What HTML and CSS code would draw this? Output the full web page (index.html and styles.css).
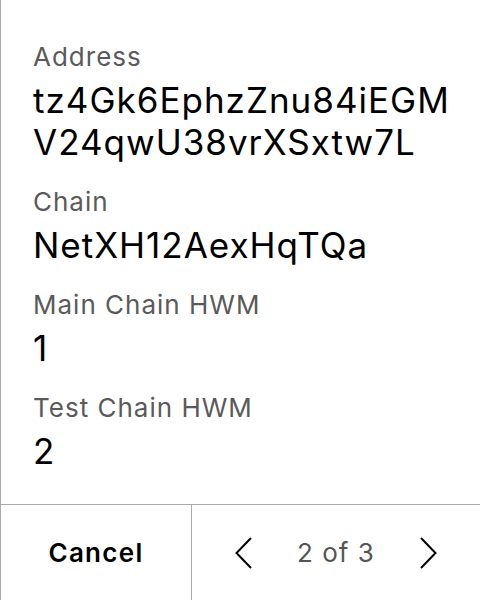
FILE: index.html
```html
<!DOCTYPE html>
<html>
<head>
<meta charset="utf-8">
<link rel="stylesheet" href="styles.css">
</head>
<body>
<div class="screen">
  <div class="content">
    <div class="field">
      <div class="label">Address</div>
      <div class="value">tz4Gk6EphzZnu84iEGMV24qwU38vrXSxtw7L</div>
    </div>
    <div class="field">
      <div class="label">Chain</div>
      <div class="value">NetXH12AexHqTQa</div>
    </div>
    <div class="field">
      <div class="label">Main Chain HWM</div>
      <div class="value">1</div>
    </div>
    <div class="field">
      <div class="label">Test Chain HWM</div>
      <div class="value">2</div>
    </div>
  </div>
  <div class="footer">
    <div class="cancel">Cancel</div>
    <div class="pager">
      <svg class="chev" width="18" height="34" viewBox="0 0 18 34"><path d="M16 2 L1.5 17 L16 32" fill="none" stroke="#000" stroke-width="2"/></svg>
      <span class="count">2 of 3</span>
      <svg class="chev" width="18" height="34" viewBox="0 0 18 34"><path d="M2 2 L16.5 17 L2 32" fill="none" stroke="#000" stroke-width="2"/></svg>
    </div>
  </div>
</div>
</body>
</html>
```
FILE: styles.css
```css
* { box-sizing: border-box; }
html, body { margin: 0; padding: 0; background: #fff; }
body { font-family: Inter, "Noto Sans", sans-serif; color: #000; }
.screen {
  width: 480px;
  height: 600px;
  border-left: 1px solid #aaa;
  display: flex;
  flex-direction: column;
}
.content {
  flex: 1;
  padding: 39px 30px 0 32px;
  display: flex;
  flex-direction: column;
  gap: 21px;
}
.label {
  font-size: 26px;
  line-height: 36px;
  letter-spacing: 1px;
  color: #5a5a5a;
  margin-bottom: 4px;
}
.value {
  font-size: 35px;
  line-height: 42px;
  letter-spacing: 1px;
  color: #000;
  word-break: break-all;
}
.footer {
  height: 96px;
  border-top: 1px solid #aaa;
  display: grid;
  grid-template-columns: 191px 1fr;
}
.cancel {
  border-right: 1px solid #aaa;
  display: flex;
  align-items: center;
  justify-content: center;
  font-size: 26px;
  font-weight: 600;
  letter-spacing: 1.3px;
}
.pager {
  display: flex;
  align-items: center;
  justify-content: center;
  gap: 44px;
}
.count {
  font-size: 26px;
  letter-spacing: 1px;
  color: #555;
}
.chev { display: block; }
```
